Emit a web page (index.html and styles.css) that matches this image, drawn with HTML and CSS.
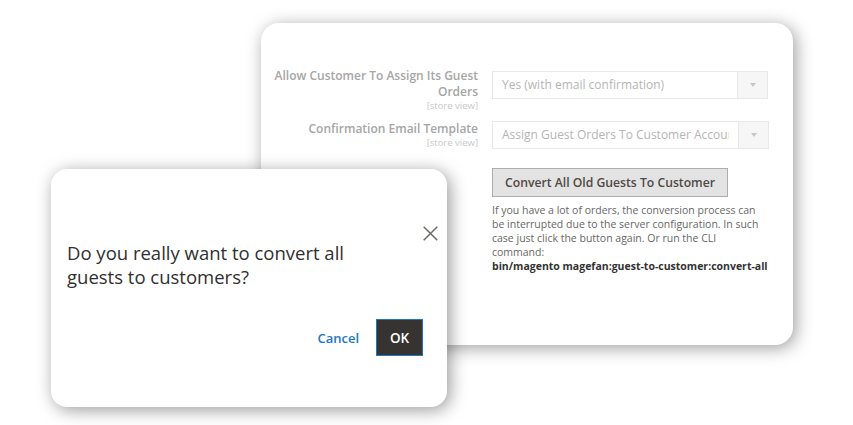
FILE: index.html
```html
<!DOCTYPE html>
<html>
<head>
<meta charset="utf-8">
<link rel="stylesheet" href="styles.css">
</head>
<body>
<div class="stage">
  <div class="config-card">
    <div class="row row-first">
      <div class="label">
        <span class="label-text">Allow Customer To Assign Its Guest Orders</span>
        <span class="scope">[store view]</span>
      </div>
      <div class="select select-first">
        <span class="select-value">Yes (with email confirmation)</span>
        <span class="select-arrow"><span class="tri"></span></span>
      </div>
    </div>
    <div class="row row-second">
      <div class="label">
        <span class="label-text">Confirmation Email Template</span>
        <span class="scope">[store view]</span>
      </div>
      <div class="select">
        <span class="select-value">Assign Guest Orders To Customer Account</span>
        <span class="select-arrow"><span class="tri"></span></span>
      </div>
    </div>
    <div class="row row-action">
      <div class="label"></div>
      <div class="action">
        <button class="convert-btn">Convert All Old Guests To Customer</button>
        <p class="note">If you have a lot of orders, the conversion process can be interrupted due to the server configuration. In such case just click the button again. Or run the CLI command:<br><strong>bin/magento magefan:guest-to-customer:convert-all</strong></p>
      </div>
    </div>
  </div>

  <div class="modal">
    <button class="modal-close" aria-label="Close">
      <svg width="15" height="15" viewBox="0 0 15 15"><path d="M0.7 0.7 L14.3 14.3 M14.3 0.7 L0.7 14.3" stroke="#6e6a66" stroke-width="1.5" fill="none"/></svg>
    </button>
    <div class="modal-text">Do you really want to convert all guests to customers?</div>
    <div class="modal-footer">
      <button class="btn-cancel">Cancel</button>
      <button class="btn-ok">OK</button>
    </div>
  </div>
</div>
</body>
</html>
```

FILE: styles.css
```css
html, body {
  margin: 0;
  padding: 0;
  background: #ffffff;
  font-family: "Open Sans", "Noto Sans", sans-serif;
}

.stage {
  position: relative;
  width: 853px;
  height: 425px;
  overflow: hidden;
}

.config-card {
  margin: 23px 0 0 261px;
  width: 532px;
  height: 322px;
  box-sizing: border-box;
  padding: 45px 25px 0 5px;
  background: #ffffff;
  border-radius: 18px;
  box-shadow: 3px 3px 17px rgba(0, 0, 0, 0.38);
}

.row {
  display: flex;
  gap: 14px;
  align-items: flex-start;
}

.row-second {
  margin-top: 9px;
}

.row-action {
  margin-top: 19px;
}

.label {
  width: 212px;
  flex: none;
  display: flex;
  flex-direction: column;
  align-items: flex-end;
  text-align: right;
}

.label-text {
  font-size: 12px;
  line-height: 16px;
  font-weight: 600;
  color: #a6a6a6;
}

.scope {
  font-size: 9.5px;
  line-height: 12px;
  color: #c8c8c8;
}

.select {
  width: 277px;
  height: 28px;
  box-sizing: border-box;
  border: 1px solid #e8e8e8;
  display: flex;
  align-items: stretch;
  background: #fff;
}

.select-first {
  margin-top: 3px;
}

.select-value {
  flex: 1;
  min-width: 0;
  margin: 0 9px 0 9px;
  font-size: 12px;
  line-height: 26px;
  color: #b5b5b5;
  white-space: nowrap;
  overflow: hidden;
}

.select-arrow {
  width: 29px;
  flex: none;
  border-left: 1px solid #e8e8e8;
  background: #f6f6f6;
  display: flex;
  align-items: center;
  justify-content: center;
}

.tri {
  width: 0;
  height: 0;
  border-left: 3px solid transparent;
  border-right: 3px solid transparent;
  border-top: 4px solid #c6c6c6;
}

.action {
  width: 277px;
}

.convert-btn {
  display: block;
  width: 236px;
  height: 29px;
  box-sizing: border-box;
  padding: 0;
  background: #e3e3e3;
  border: 1px solid #adadad;
  font-family: "Open Sans", "Noto Sans", sans-serif;
  font-size: 12.2px;
  font-weight: 600;
  color: #514943;
}

.note {
  margin: 6px 0 0 0;
  font-size: 10.5px;
  line-height: 14px;
  color: #676767;
}

.note strong {
  color: #333;
  font-weight: 700;
}

.modal {
  position: absolute;
  left: 51px;
  top: 169px;
  width: 396px;
  height: 238px;
  box-sizing: border-box;
  padding: 72px 24px 0 16px;
  background: #ffffff;
  border-radius: 16px;
  box-shadow: 3px 3px 17px rgba(0, 0, 0, 0.4);
}

.modal-close {
  position: absolute;
  top: 57px;
  right: 9px;
  width: 15px;
  height: 15px;
  padding: 0;
  border: 0;
  background: none;
  display: flex;
}

.modal-text {
  font-size: 18.5px;
  line-height: 24px;
  color: #303030;
  width: 320px;
}

.modal-footer {
  margin-top: 30px;
  display: flex;
  justify-content: flex-end;
  align-items: center;
  gap: 17px;
}

.btn-cancel {
  padding: 0;
  border: 0;
  background: none;
  font-family: "Open Sans", "Noto Sans", sans-serif;
  font-size: 13px;
  font-weight: 600;
  color: #1979c3;
}

.btn-ok {
  width: 47px;
  height: 37px;
  box-sizing: border-box;
  padding: 0;
  background: #373330;
  border: 1px solid #1979c3;
  font-family: "Open Sans", "Noto Sans", sans-serif;
  font-size: 13.5px;
  font-weight: 600;
  color: #ffffff;
}
```
